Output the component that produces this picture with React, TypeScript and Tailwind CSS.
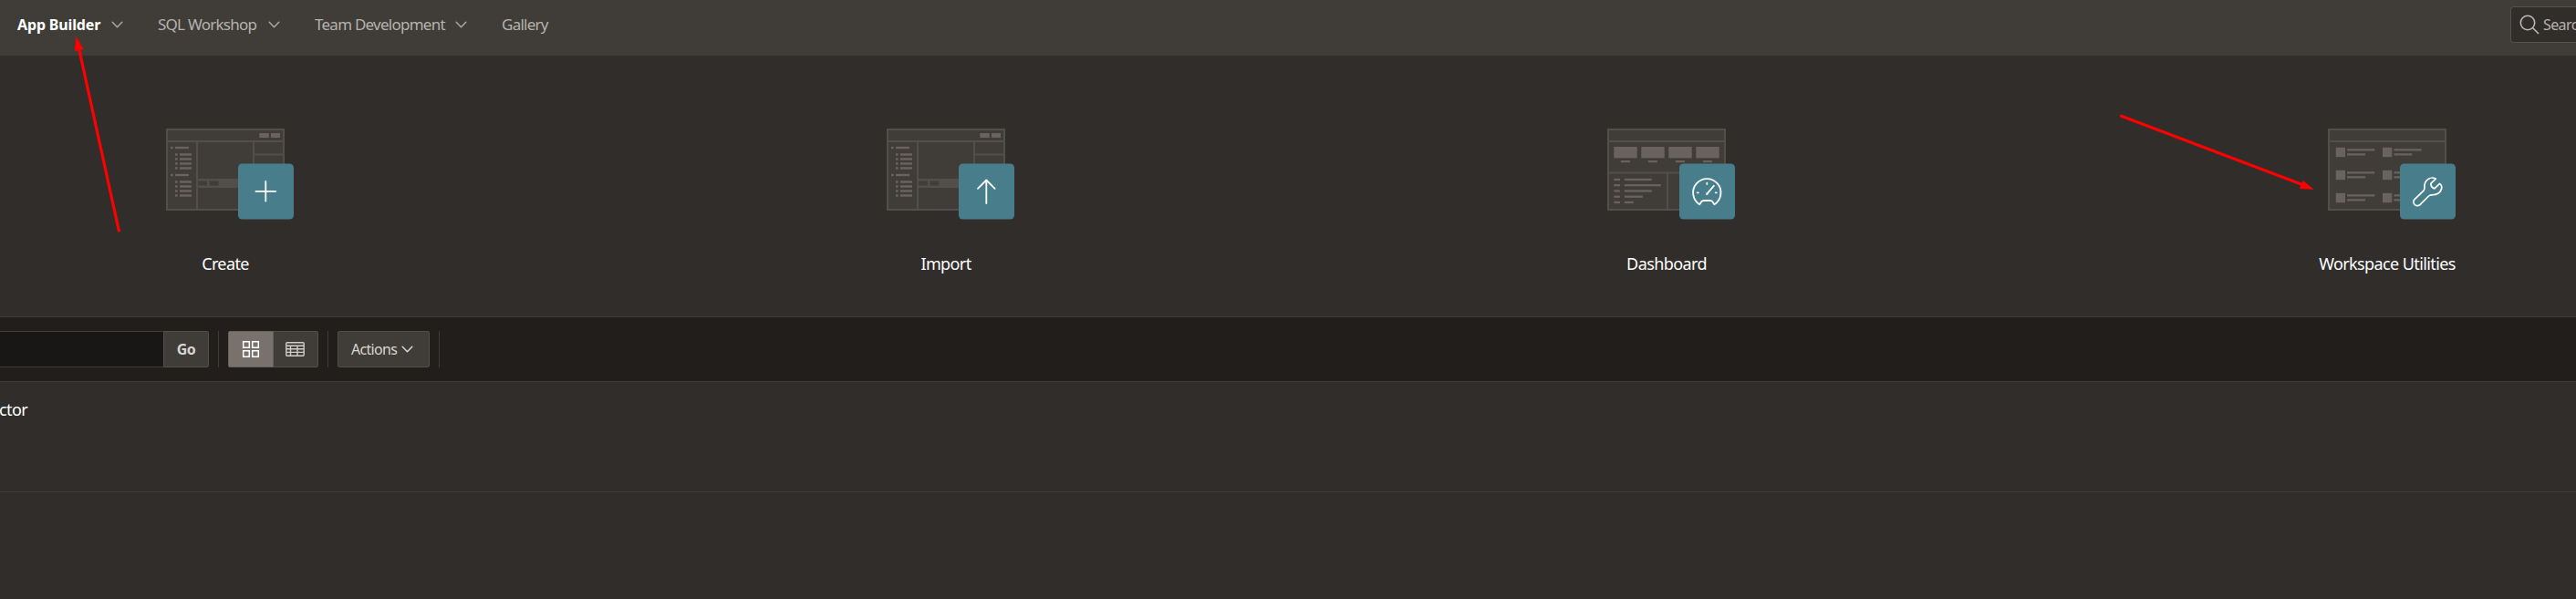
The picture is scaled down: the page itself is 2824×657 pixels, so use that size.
import React from "react";

const LINE = "#524e49";
const FILL = "#403c38";
const DIM = "#6a625f";

const Chevron = ({ className = "" }: { className?: string }) => (
  <svg className={`shrink-0 ${className}`} width="13" height="8" viewBox="0 0 13 8" fill="none" stroke="currentColor" strokeWidth="1.5" strokeLinecap="round" strokeLinejoin="round">
    <path d="M1.2 1.2 6.5 6.8l5.3-5.6" />
  </svg>
);

const Frame = ({ children }: { children: React.ReactNode }) => (
  <>
    <rect x="1" y="1" width="128" height="88" fill={FILL} stroke={LINE} strokeWidth="2" />
    <rect x="2" y="13" width="126" height="2" fill={LINE} />
    {children}
  </>
);

const BuilderArt = () => (
  <Frame>
    <g fill={LINE}>
      <rect x="33" y="15" width="2" height="73" />
      <rect x="95" y="15" width="2" height="73" />
      <rect x="97" y="27.5" width="31" height="2" />
      <rect x="35" y="55" width="60" height="10" />
    </g>
    <rect x="35" y="57.5" width="10" height="5" fill={FILL} />
    <rect x="47.5" y="57.5" width="10" height="5" fill={FILL} />
    <g fill={DIM}>
      <rect x="102.3" y="5" width="10.4" height="5" />
      <rect x="115" y="5" width="10" height="5" />
      {[21, 51].map((y) => (
        <g key={y}>
          <rect x="5" y={y - 1.2} width="2.6" height="2.4" />
          <rect x="10" y={y - 1.2} width="15" height="2.4" />
          {[7.5, 12.5, 17.5, 22.5].map((d) => (
            <g key={d}>
              <rect x="10" y={y + d - 1.3} width="2.6" height="2.5" />
              <rect x="15" y={y + d - 1.3} width="13" height="2.5" />
            </g>
          ))}
        </g>
      ))}
    </g>
  </Frame>
);

const DashboardArt = () => (
  <Frame>
    <rect x="2" y="47.5" width="126" height="2" fill={LINE} />
    <rect x="65" y="49" width="2" height="39" fill={LINE} />
    <g fill={DIM}>
      {[7.3, 37.3, 67.3, 97.3].map((x) => (
        <g key={x}>
          <rect x={x} y="20" width="25.4" height="12.4" />
          <rect x={x + 7.6} y="35" width="10" height="2.2" />
        </g>
      ))}
      {[30, 40, 30, 20, 10].map((w, i) => (
        <g key={i}>
          <rect x="7.3" y={54.8 + i * 6.25} width="6.6" height="2.3" />
          <rect x="18.8" y={54.8 + i * 6.25} width={w} height="2.3" />
        </g>
      ))}
    </g>
  </Frame>
);

const UtilitiesArt = () => (
  <Frame>
    <g fill={DIM}>
      {[20.8, 45.8, 70.8].map((y) =>
        [8.7, 60].map((x) => (
          <g key={`${x}-${y}`}>
            <rect x={x} y={y} width="10.3" height="10.4" />
            <rect x={x + 12.4} y={y + 1.4} width="30.2" height="2.3" />
            <rect x={x + 12.4} y={y + 6.4} width="20" height="2.3" />
          </g>
        ))
      )}
    </g>
  </Frame>
);

const PlusGlyph = () => <path d="M109.3 58v21.6M98.4 68.8h21.8" />;
const UpGlyph = () => <path d="M109.3 82V56.6M100 65.8l9.3-9.3 9.3 9.3" />;
const GaugeGlyph = () => (
  <>
    <path d="M101.2 83.2a15.2 15.2 0 1 1 16.2 0l-2-2.9q-.9-1.3-2.5-1.3h-7.2q-1.6 0-2.5 1.3z" />
    <path d="M109.3 71.6l7.5-8.8M109.3 59.6v1.4M98.7 70.3h1.2M118.7 70.3h1.2" />
    <circle cx="109.3" cy="71.8" r="1.2" fill="#fff" stroke="none" />
  </>
);
const WrenchGlyph = () => (
  <path
    strokeWidth="1.7"
    d="M118.2 55.1L112.8 60.4Q113 64.6 116.8 65.9L122.6 60.4Q125.6 62.6 124.5 66.4Q122.2 73 113.4 72.8Q111.6 72.9 110.6 74L101.4 83.2A4.1 4.1 0 0 1 95 77.6L104.7 68.3Q105.9 67.1 105.9 65.2V62.4C106.4 56.6 112.6 51.9 118.2 55.1Z"
  />
);

const tiles = [
  { label: "Create", art: <BuilderArt />, glyph: <PlusGlyph /> },
  { label: "Import", art: <BuilderArt />, glyph: <UpGlyph /> },
  { label: "Dashboard", art: <DashboardArt />, glyph: <GaugeGlyph /> },
  { label: "Workspace Utilities", art: <UtilitiesArt />, glyph: <WrenchGlyph /> },
];

const nav = [
  { label: "App Builder", w: "w-[91px]", active: true, menu: true },
  { label: "SQL Workshop", w: "w-[109px]", menu: true },
  { label: "Team Development", w: "w-[142px]", menu: true },
  { label: "Gallery", w: "w-[52px]" },
];

const Sep = ({ className = "" }: { className?: string }) => <span className={`h-10 w-px bg-[#403c38] ${className}`} />;

export default function App() {
  return (
    <div className="relative flex h-[657px] w-[2824px] flex-col overflow-hidden bg-[#312d2a] font-['Noto_Sans','Open_Sans',sans-serif] text-white">
      <header className="flex h-[61px] shrink-0 items-start justify-between bg-[#403c38]">
        <nav className="flex h-[54px] items-center gap-[38px] pl-[19px]">
          {nav.map((n) => (
            <a key={n.label} className={`flex items-center whitespace-nowrap ${n.active ? "text-[16px] font-bold tracking-[-0.15px] text-white" : "text-[17px] tracking-[-0.75px] text-[#b5b2ae]"}`}>
              <span className={n.w}>{n.label}</span>
              {n.menu && <Chevron className="ml-[12px] text-[#a9a5a1]" />}
            </a>
          ))}
        </nav>
        <div className="mt-[7px] flex h-10 w-[72px] items-center overflow-hidden rounded-l-[4px] border border-r-0 border-[#55514c] bg-[#312d2a] pl-[9px] text-[#b5b2ae]">
          <svg className="shrink-0" width="22" height="22" viewBox="0 0 22 22" fill="none" stroke="#bbb8b5" strokeWidth="1.6">
            <circle cx="9" cy="9" r="7.7" />
            <path d="M14.5 14.5 21 21" />
          </svg>
          <span className="ml-[4px] text-[16px] tracking-[-0.6px]">Search</span>
        </div>
      </header>

      <section className="-ml-[148px] grid h-[286px] shrink-0 grid-cols-[repeat(4,790px)]">
        {tiles.map((t) => (
          <div key={t.label} className="flex flex-col items-center pt-20">
            <svg width="130" height="90" viewBox="0 0 130 90" className="overflow-visible">
              {t.art}
              <rect x="79" y="38.5" width="61" height="61" rx="4.5" fill="#487d8b" />
              <g fill="none" stroke="#fff" strokeWidth="1.8" strokeLinecap="round" strokeLinejoin="round">{t.glyph}</g>
            </svg>
            <span className="mt-[44px] text-[18px] leading-[28px] tracking-[-0.6px]">{t.label}</span>
          </div>
        ))}
      </section>

      <section className="flex h-[72px] shrink-0 items-center border-y border-[#403c38] bg-[#221e1b] text-[#d8d5d2]">
        <div className="h-10 w-[179px] border-y border-[#403c38] bg-[#191715]" />
        <button className="h-10 w-[50px] rounded-r-[2px] border border-[#524e49] bg-[#403c38] text-[16px] font-bold tracking-[-0.5px]">Go</button>
        <Sep className="ml-[10px]" />
        <div className="ml-[10px] flex h-10">
          <button className="flex w-[50px] items-center justify-center rounded-l-[2px] border border-[#67615c] bg-[#79716b]">
            <svg width="20" height="20" viewBox="0 0 20 20" fill="none" stroke="#fff" strokeWidth="1.5">
              <path d="M1.7 1.7h6.6v6.6H1.7zM11.7 1.7h6.6v6.6h-6.6zM1.7 11.7h6.6v6.6H1.7zM11.7 11.7h6.6v6.6h-6.6z" />
            </svg>
          </button>
          <button className="flex w-[49px] items-center justify-center rounded-r-[2px] border border-l-0 border-[#524e49] bg-[#403c38] pr-px">
            <svg width="21" height="16" viewBox="0 0 21 16" fill="none" stroke="#cfccc9" strokeWidth="1.4">
              <rect x=".8" y=".8" width="19.4" height="14.4" rx="1" />
              <path d="M1 4.2h19M1 7.8h19M1 11.4h19M5.5 4.2v11M13 4.2v11" />
            </svg>
          </button>
        </div>
        <Sep className="ml-[10px]" />
        <button className="ml-[10px] flex h-10 w-[101px] items-center rounded-[2px] border border-[#524e49] bg-[#403c38] pl-[14px] text-[16px]">
          <span className="w-[51px] whitespace-nowrap text-left tracking-[-0.7px]">Actions</span>
          <Chevron className="ml-[4px]" />
        </button>
        <Sep className="ml-[10px]" />
      </section>

      <section className="flex h-[121px] shrink-0 items-start border-b border-[#403c38] pt-[16px]">
        <span className="-ml-[1px] text-[18px] leading-[28px] tracking-[-0.6px]">ctor</span>
      </section>

      <svg className="pointer-events-none absolute inset-0" width="2824" height="657" fill="#f00" stroke="#f00">
        <path d="M130.3 253 86.5 53M2325.5 127.3 2524 202.5" strokeWidth="3.2" strokeLinecap="round" />
        <path d="M83.5 40.5 82 55.8 91.3 54ZM2536 207.5 2524.7 198.2 2521.2 206.8Z" strokeWidth=".5" />
      </svg>
    </div>
  );
}
